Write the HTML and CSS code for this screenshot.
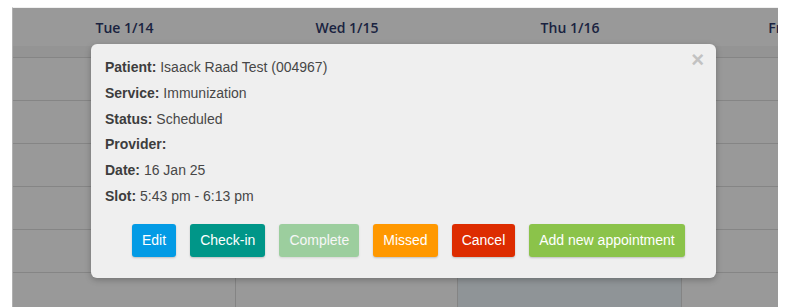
FILE: index.html
```html
<!DOCTYPE html>
<html>
<head>
<meta charset="utf-8">
<link rel="stylesheet" href="styles.css">
</head>
<body>
<div class="calendar">
  <div class="cols">
    <div class="col c1">
      <div class="head">Tue 1/14</div>
      <div class="band"></div>
      <div class="row"></div><div class="row"></div><div class="row"></div><div class="row"></div><div class="row"></div><div class="row"></div>
    </div>
    <div class="col c2">
      <div class="head">Wed 1/15</div>
      <div class="band"></div>
      <div class="row"></div><div class="row"></div><div class="row"></div><div class="row"></div><div class="row"></div><div class="row"></div>
    </div>
    <div class="col c3 today">
      <div class="head">Thu 1/16</div>
      <div class="band"></div>
      <div class="row"></div><div class="row"></div><div class="row"></div><div class="row"></div><div class="row"></div><div class="row"></div>
    </div>
    <div class="col c4">
      <div class="head">Fri 1/17</div>
      <div class="band"></div>
      <div class="row"></div><div class="row"></div><div class="row"></div><div class="row"></div><div class="row"></div><div class="row"></div>
    </div>
  </div>
  <div class="backdrop"></div>
</div>

<div class="modal">
  <span class="close">&times;</span>
  <p><b>Patient:</b> Isaack Raad Test (004967)</p>
  <p><b>Service:</b> Immunization</p>
  <p><b>Status:</b> Scheduled</p>
  <p><b>Provider:</b></p>
  <p><b>Date:</b> 16 Jan 25</p>
  <p><b>Slot:</b> 5:43 pm - 6:13 pm</p>
  <div class="actions">
    <button class="btn edit">Edit</button>
    <button class="btn checkin">Check-in</button>
    <button class="btn complete">Complete</button>
    <button class="btn missed">Missed</button>
    <button class="btn cancel">Cancel</button>
    <button class="btn add">Add new appointment</button>
  </div>
</div>
</body>
</html>
```

FILE: styles.css
```css
html, body {
  margin: 0;
  padding: 0;
  background: #ffffff;
  width: 798px;
  height: 307px;
  overflow: hidden;
}

.calendar {
  position: relative;
  margin: 7px 0 0 12px;
  width: 766px;
  height: 300px;
  overflow: hidden;
  border-left: 1px solid #b0b0b0;
  box-sizing: border-box;
  border-top: 1px solid #f0f0f0;
}

.cols {
  display: flex;
  width: 900px;
}

.col {
  flex: none;
  display: flex;
  flex-direction: column;
}

.c1 { width: 223px; }
.c2 { width: 222px; }
.c3 { width: 224px; }
.c4 { width: 223px; }

.head {
  height: 38px;
  display: flex;
  align-items: center;
  justify-content: center;
  font-family: "Open Sans", "Liberation Sans", sans-serif;
  font-weight: 600;
  font-size: 14px;
  color: #2e3a6c;
  padding-top: 1px;
  box-sizing: border-box;
  background: #ffffff;
}

.band {
  height: 11px;
  background: #f7f7f7;
}

.row {
  height: 42px;
  border-top: 1px solid #dedede;
  border-right: 1px solid #dcdcdc;
  background: #ffffff;
}

.today .row {
  background: #eef7fc;
}

.backdrop {
  position: absolute;
  inset: 0;
  background: rgba(0, 0, 0, 0.4);
}

.modal {
  position: absolute;
  left: 91px;
  top: 44px;
  width: 625px;
  height: 234px;
  box-sizing: border-box;
  background: #efefef;
  border-radius: 6px;
  box-shadow: 0 2px 6px rgba(0, 0, 0, 0.25);
  padding: 11px 14px 0 14px;
  font-family: "Liberation Sans", Arial, sans-serif;
  font-size: 14px;
  color: #474747;
}

.modal p {
  margin: 0;
  line-height: 25.8px;
}

.modal b {
  color: #3d3d3d;
  font-weight: 700;
}

.close {
  position: absolute;
  right: 12px;
  top: 3px;
  font-family: "Liberation Sans", sans-serif;
  font-size: 22px;
  font-weight: 700;
  color: #c2c2c2;
  line-height: 26px;
}

.actions {
  display: flex;
  gap: 14px;
  margin-top: 14px;
  padding-left: 27px;
}

.btn {
  height: 33px;
  padding: 0 10px;
  border: none;
  border-radius: 3px;
  color: #ffffff;
  font-family: "Liberation Sans", Arial, sans-serif;
  font-size: 14px;
  box-shadow: 0 1px 2px rgba(0, 0, 0, 0.2);
}

.edit { background: #039be5; }
.checkin { background: #009688; }
.complete { background: #4caf50; opacity: 0.5; }
.missed { background: #ff9800; }
.cancel { background: #dd2c00; }
.add { background: #8bc34a; }
```
